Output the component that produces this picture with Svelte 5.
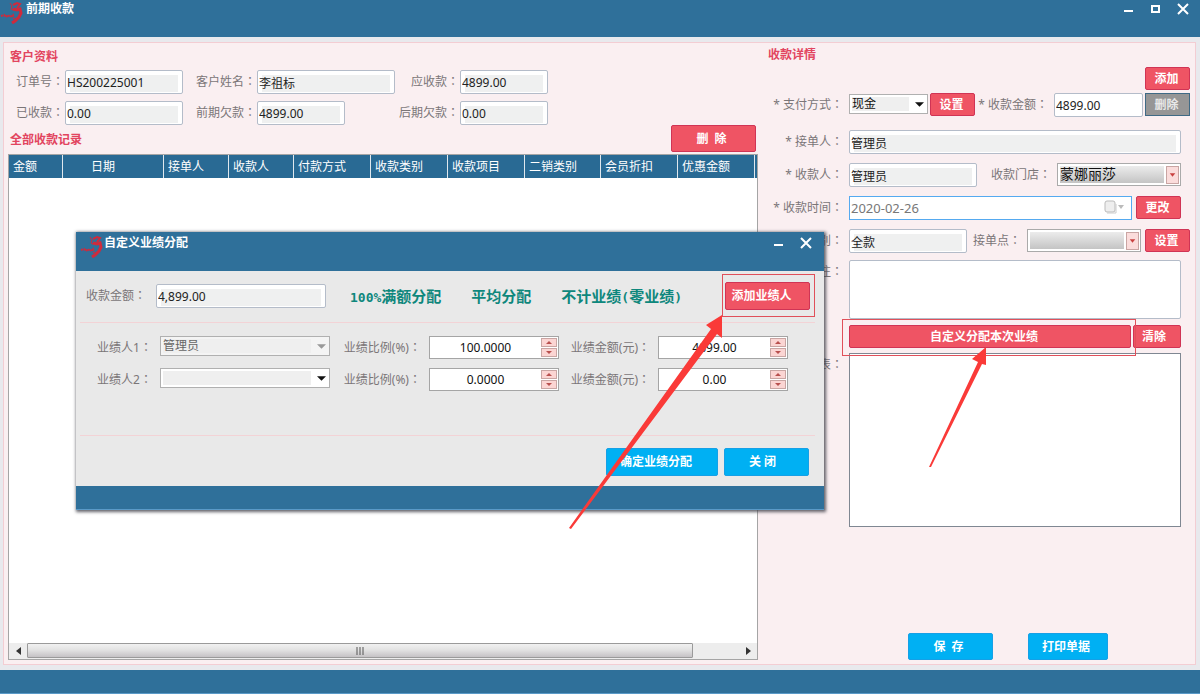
<script>
  let columns = [
    { name: "金额", width: 54 },
    { name: "日期", width: 101, indent: true },
    { name: "接单人", width: 65 },
    { name: "收款人", width: 65 },
    { name: "付款方式", width: 77 },
    { name: "收款类别", width: 77 },
    { name: "收款项目", width: 77 },
    { name: "二销类别", width: 76 },
    { name: "会员折扣", width: 77 },
    { name: "优惠金额", width: 77 },
  ];

  let customer = [
    { id: "order", label: "订单号", value: "HS200225001" },
    { id: "name", label: "客户姓名", value: "李祖标" },
    { id: "due", label: "应收款", value: "4899.00" },
    { id: "paid", label: "已收款", value: "0.00" },
    { id: "before", label: "前期欠款", value: "4899.00", short: true },
    { id: "after", label: "后期欠款", value: "0.00" },
  ];

  let people = [
    { person: "管理员", ratio: "100.0000", amount: "4899.00", locked: true },
    { person: "", ratio: "0.0000", amount: "0.00", locked: false },
  ];
</script>

<style>
  :global(body) {
    margin: 0;
    font: 12px/16px "Noto Sans", "Noto Sans CJK SC", sans-serif;
  }
  * {
    box-sizing: border-box;
  }
  button,
  input,
  select,
  textarea {
    font: inherit;
    margin: 0;
    min-width: 0;
  }
  .window {
    position: relative;
    min-height: 100vh;
    display: flex;
    flex-direction: column;
    background: #e8e9ed;
  }

  /* title bars */
  .titlebar {
    display: flex;
    align-items: flex-start;
    height: 37px;
    padding-right: 9px;
    background: #2f709a;
    color: #fff;
  }
  .titlebar h1,
  .titlebar h2 {
    flex: 1;
    margin: 0;
    padding-left: 2px;
    font-size: 12px;
    line-height: 18px;
    font-weight: bold;
  }
  .logo {
    width: 24px;
    height: 24px;
  }
  .tools {
    display: flex;
    gap: 11px;
    padding-top: 1px;
  }
  .tools button {
    width: 16px;
    height: 16px;
    padding: 0;
    border: 0;
    background: none;
  }
  .tools svg {
    display: block;
    stroke: #fff;
    stroke-width: 2;
    fill: none;
  }
  .bottombar {
    height: 24px;
    background: #2f709a;
    border-bottom: 1px solid #5a9ac8;
  }

  .panel {
    flex: 1;
    display: flex;
    margin: 5px 4px 5px 3px;
    border: 1px solid #f3cdd3;
    background: #faeff1;
  }
  .records {
    flex: 1;
    min-width: 0;
    display: flex;
    flex-direction: column;
    padding: 0 0 4px 4px;
  }
  .details {
    width: 437px;
    display: flex;
    flex-direction: column;
  }
  h3 {
    margin: 0;
    font-size: 12px;
    line-height: 27px;
    font-weight: bold;
    color: #e2455f;
    padding-left: 2px;
  }
  label {
    height: 24px;
    color: #7b7678;
    text-align: right;
    white-space: nowrap;
    line-height: 22px;
  }
  .colon {
    font-family: "Noto Sans CJK TC", sans-serif;
  }

  /* controls */
  .box {
    height: 24px;
    padding: 1px 1px 0;
    border: 1px solid #b4bcc9;
    border-radius: 2px;
    background: #fff;
    color: #222;
  }
  .box[readonly] {
    background: linear-gradient(#eff0f0, #eff0f0) 4px 4px / calc(100% - 8px) calc(100% - 5px) no-repeat #fff;
  }
  .btn {
    height: 23px;
    padding: 0;
    border: 1px solid #d03455;
    border-radius: 2px;
    background: #ef5464;
    color: #fff;
    font-weight: bold;
    white-space: pre;
  }
  .small {
    width: 45px;
    padding-right: 2px;
  }
  .btn.gray {
    border-color: #3f6a85;
    border-radius: 0;
    background: #969696;
    color: #e8e8e8;
  }
  .btn.blue {
    height: 28px;
    border-color: #16a0e6;
    background: #00b0f3;
  }
  .pick {
    display: grid;
    align-items: center;
  }
  .pick select,
  .pick .arrow {
    grid-area: 1 / 1;
  }
  .pick select {
    appearance: none;
    width: 100%;
    height: 20px;
    padding: 0 20px 1px 2px;
    border: 1px solid #b0b0b0;
    border-radius: 0;
    background: linear-gradient(#efefef, #efefef) 2px 2px / calc(100% - 20px) calc(100% - 4px) no-repeat #fff;
    color: #111;
    opacity: 1;
  }
  .pick select:disabled {
    background-color: #f4f4f4;
    color: #666;
  }
  .pick .arrow {
    justify-self: end;
    margin-right: 4px;
    width: 9px;
    height: 5px;
    pointer-events: none;
  }
  .pick.glossy select {
    height: 23px;
    padding-bottom: 2px;
    font-size: 14px;
    border-color: #aaa;
    background: linear-gradient(#ececec, #d8d8d8 50%, #c4c4c4) 2px 2px / calc(100% - 18px) calc(100% - 4px) no-repeat #fff;
  }
  .pick.glossy .arrow {
    margin-right: 2px;
    width: 13px;
    height: 18px;
    border: 1px solid #c9a5a3;
    background: #fbdcdb;
  }

  /* left side */
  .customer {
    display: grid;
    grid-template-columns: 57px 118px 74px 138px 65px 88px;
    row-gap: 7px;
  }
  .customer label {
    padding-right: 1px;
  }
  .short {
    width: 88px;
  }
  .records-head {
    display: flex;
    justify-content: space-between;
    padding-right: 2px;
    height: 29px;
  }
  .records-head h3 {
    line-height: 30px;
  }
  .records-head .btn {
    width: 85px;
    height: 27px;
    padding-right: 4px;
  }
  .table-box {
    flex: 1;
    display: flex;
    flex-direction: column;
    justify-content: space-between;
    border: 1px solid #a5a5a5;
    background: #fff;
  }
  table {
    width: 100%;
    table-layout: fixed;
    border-collapse: separate;
    border-spacing: 0;
  }
  th {
    height: 23px;
    padding: 0 0 0 4px;
    border-right: 1px solid #e0e8ee;
    background: #296a94;
    color: #fff;
    font-weight: normal;
    text-align: left;
    white-space: nowrap;
  }
  th:last-child {
    border-right: 0;
    padding: 0;
  }
  th.indent {
    padding-left: 28px;
  }
  .scroll {
    display: flex;
    height: 16px;
    background: #ededed;
  }
  .scroll button {
    width: 18px;
    padding: 0;
    border: 0;
    background: none;
  }
  .scroll svg {
    display: block;
    margin: auto;
  }
  .track {
    flex: 1;
    padding-right: 46px;
  }
  .thumb {
    display: flex;
    align-items: center;
    height: 15px;
    border: 1px solid #9a9a9a;
    border-radius: 1px;
    background: linear-gradient(#f1f1f1, #e0e0e0 50%, #c5c2c5);
  }

  /* right side */
  .details h3 {
    padding-left: 10px;
    line-height: 24px;
  }
  .row {
    display: flex;
    align-items: flex-start;
    padding-right: 14px;
    margin-bottom: 9px;
  }
  .row > label:first-child {
    width: 85px;
    margin-right: 6px;
  }
  .wide {
    padding-right: 5px;
  }
  .grow {
    flex: 1;
  }
  .add-row {
    display: flex;
    justify-content: flex-end;
    padding-right: 5px;
    margin-bottom: 3px;
  }
  .method {
    width: 79px;
    margin: 1px 2px 0 0;
  }
  .pay-label {
    width: 75px;
    padding-right: 2px;
    margin-right: 4px;
  }
  .money {
    width: 89px;
    margin-right: 2px;
  }
  .pay {
    margin-bottom: 13px;
  }
  .cashier {
    width: 128px;
  }
  .store-label {
    width: 74px;
    margin-right: 6px;
  }
  .kind {
    width: 118px;
  }
  .point-label {
    width: 54px;
    margin-right: 6px;
  }
  .point {
    flex: 1;
    margin-right: 4px;
  }
  .date {
    flex: 1;
    display: flex;
    align-items: center;
    height: 24px;
    margin-right: 4px;
    padding-right: 6px;
    border: 1px solid #55aaf0;
    background: #fff;
  }
  .date input {
    flex: 1;
    padding: 0 1px;
    border: 0;
    background: none;
    color: #777;
    font-size: 13px;
  }
  .date button {
    height: 16px;
    padding: 0;
    border: 0;
    background: none;
  }
  textarea {
    height: 59px;
    border: 1px solid #b4bcc9;
    border-radius: 2px;
    resize: none;
  }
  .list {
    height: 174px;
    border: 1px solid #7f8792;
    background: #fff;
  }
  .kinds {
    margin-bottom: 7px;
  }
  .note {
    margin-bottom: 6px;
  }
  .share {
    padding-left: 91px;
    margin-bottom: 5px;
  }
  .clear {
    width: 48px;
    padding-right: 6px;
  }
  .marked {
    position: relative;
    display: flex;
  }
  .marked .btn {
    flex: 1;
    padding-right: 12px;
  }
  .frame {
    position: absolute;
    inset: -6px -5px -8px -7px;
    border: 1px solid #e0505a;
    pointer-events: none;
  }
  .pointer {
    position: absolute;
    z-index: 2;
    pointer-events: none;
    fill: #fa3a38;
  }
  .share .marked {
    margin-right: 2px;
  }
  .share .pointer {
    left: 79px;
    top: 21px;
  }
  .actions {
    display: flex;
    gap: 35px;
    margin-top: auto;
    padding: 0 0 4px 150px;
  }
  .actions .blue {
    width: 80px;
    height: 27px;
    padding-right: 4px;
  }
  .actions .save {
    width: 85px;
  }

  /* dialog */
  .dialog {
    position: absolute;
    left: 76px;
    top: 232px;
    width: 748px;
    background: #e9e9e9;
    box-shadow: 1px 1px 3px 1px rgba(60, 60, 70, 0.8);
  }
  .dialog .titlebar {
    height: 39px;
    padding: 2px 10px 0 4px;
  }
  .dialog .titlebar h2 {
    padding-left: 0;
  }
  .dialog .tools {
    padding-top: 1px;
  }
  .total {
    display: flex;
    align-items: center;
    height: 51px;
    padding: 0 14px 2px 10px;
  }
  .total label {
    width: 60px;
    margin-right: 10px;
  }
  .total .box {
    width: 170px;
    margin-right: 24px;
  }
  .total a {
    margin-right: 30px;
    color: #0e877c;
    font-size: 15px;
    line-height: 20px;
    font-weight: bold;
    text-decoration: none;
    white-space: nowrap;
  }
  .mono {
    font: bold 13px "DejaVu Sans Mono", monospace;
  }
  .total .marked {
    width: 85px;
    margin-left: auto;
  }
  .total .marked .btn {
    height: 28px;
  }
  .total .frame {
    inset: -8px -5px -7px -3px;
  }
  .total .pointer {
    right: 86px;
    top: 32px;
  }
  .people {
    display: grid;
    grid-template-columns: 84px 170px 99px 130px 99px 130px;
    row-gap: 9px;
    align-content: start;
    height: 114px;
    margin: 0 9px 0 4px;
    padding-top: 13px;
    border-top: 1px solid #f3d3d6;
    border-bottom: 1px solid #f3d3d6;
  }
  .people label {
    height: 23px;
    padding-right: 12px;
  }
  .people .pick,
  .people .spin {
    align-self: start;
    margin-left: -4px;
    margin-right: 4px;
  }
  .spin {
    display: flex;
    align-items: center;
    height: 23px;
    padding-right: 1px;
    border: 1px solid #a5a5a5;
    background: #fff;
  }
  .spin input {
    flex: 1;
    padding: 0;
    border: 0;
    background: none;
    text-align: center;
    color: #111;
  }
  .steps {
    display: grid;
    gap: 1px;
  }
  .steps button {
    display: grid;
    place-items: center;
    width: 16px;
    height: 9px;
    padding: 0;
    border: 1px solid #c9a5a3;
    background: #fbd5d3;
  }
  .confirm {
    display: flex;
    justify-content: flex-end;
    gap: 6px;
    padding: 12px 15px 10px;
  }
  .confirm .btn {
    width: 112px;
    padding-right: 12px;
  }
  .confirm .close {
    width: 85px;
    padding-right: 8px;
  }
</style>

{#snippet caption(id, text)}
  <label for={id}>{text}<span class="colon">：</span></label>
{/snippet}

{#snippet logo()}
  <svg class="logo" viewBox="0 0 24 24" fill="none" stroke="#cf2a3c" aria-hidden="true">
    <path d="M13 5l4-2 3 1-3 4" stroke-width="2" />
    <path d="M13 9l4 1 3-1 1 4-2 4-4 4-3 2" stroke-width="3" />
    <path d="M10 3l2 3-1 3 2 1" stroke-width="1" />
    <path d="M1 16l3-1 2 2 2-2 2 2 3-2 1 4" stroke-width="2" stroke-dasharray="2 1" />
  </svg>
{/snippet}

{#snippet downArrow(color)}
  <svg class="arrow" viewBox="0 0 10 5"><path d="M0 0h10L5 5z" fill={color} /></svg>
{/snippet}

{#snippet redArrow()}
  <svg class="arrow" viewBox="0 0 12 16"><path d="M3 6h6L6 10z" fill="#c9403f" /></svg>
{/snippet}

{#snippet spinner(id, value)}
  <div class="spin">
    <input {id} type="text" {value} />
    <div class="steps">
      <button aria-label="增加"><svg width="6" height="3"><path d="M0 3h6L3 0z" fill="#b8504e" /></svg></button>
      <button aria-label="减少"><svg width="6" height="3"><path d="M0 0h6L3 3z" fill="#b8504e" /></svg></button>
    </div>
  </div>
{/snippet}

<div class="window">
  <header class="titlebar">
    {@render logo()}
    <h1>前期收款</h1>
    <div class="tools">
      <button aria-label="最小化"><svg width="16" height="16"><path d="M3 10h9" /></svg></button>
      <button aria-label="最大化"><svg width="16" height="16"><path d="M4 5h7v6H4z" /></svg></button>
      <button aria-label="关闭窗口"><svg width="16" height="16"><path d="M3 3l10 10M13 3L3 13" /></svg></button>
    </div>
  </header>

  <main class="panel">
    <section class="records">
      <h3>客户资料</h3>
      <div class="customer">
        {#each customer as field}
          {@render caption(field.id, field.label)}
          <input id={field.id} class="box" class:short={field.short} value={field.value} readonly />
        {/each}
      </div>
      <div class="records-head">
        <h3>全部收款记录</h3>
        <button class="btn">删  除</button>
      </div>
      <div class="table-box">
        <table>
          <colgroup>
            {#each columns as col}
              <col style="width: {col.width}px" />
            {/each}
            <col />
          </colgroup>
          <thead>
            <tr>
              {#each columns as col}
                <th class:indent={col.indent}>{col.name}</th>
              {/each}
              <th></th>
            </tr>
          </thead>
        </table>
        <div class="scroll">
          <button aria-label="向左"><svg width="5" height="8"><path d="M5 0v8L0 4z" fill="#333" /></svg></button>
          <div class="track">
            <div class="thumb">
              <svg width="9" height="8"><path d="M1 0v8M4 0v8M7 0v8" stroke="#555" stroke-width="1" /></svg>
            </div>
          </div>
          <button aria-label="向右"><svg width="5" height="8"><path d="M0 0v8l5-4z" fill="#333" /></svg></button>
        </div>
      </div>
    </section>

    <section class="details">
      <h3>收款详情</h3>
      <div class="add-row"><button class="btn small">添加</button></div>
      <div class="row wide pay">
        {@render caption("method", "* 支付方式")}
        <div class="pick method">
          <select id="method"><option>现金</option></select>
          {@render downArrow("#111")}
        </div>
        <button class="btn small">设置</button>
        <label class="pay-label" for="money">* 收款金额<span class="colon">：</span></label>
        <input id="money" class="box money" value="4899.00" />
        <button class="btn small gray">删除</button>
      </div>
      <div class="row">
        {@render caption("taker", "* 接单人")}
        <input id="taker" class="box grow" value="管理员" readonly />
      </div>
      <div class="row">
        {@render caption("cashier", "* 收款人")}
        <input id="cashier" class="box cashier" value="管理员" readonly />
        <label class="store-label" for="store">收款门店<span class="colon">：</span></label>
        <div class="pick glossy grow">
          <select id="store"><option>蒙娜丽莎</option></select>
          {@render redArrow()}
        </div>
      </div>
      <div class="row">
        {@render caption("date", "* 收款时间")}
        <div class="date">
          <input id="date" type="text" value="2020-02-26" />
          <button aria-label="选择日期">
            <svg width="21" height="14">
              <rect x="1" y="1" width="10" height="11" rx="2" fill="#eee" stroke="#bbb" />
              <path d="M3 13h9V4" fill="none" stroke="#ccc" />
              <path d="M14 5h6l-3 4z" fill="#bbb" />
            </svg>
          </button>
        </div>
        <button class="btn small">更改</button>
      </div>
      <div class="row wide kinds">
        {@render caption("kind", "* 收款类别")}
        <input id="kind" class="box kind" value="全款" readonly />
        <label class="point-label" for="point">接单点<span class="colon">：</span></label>
        <div class="pick glossy point">
          <select id="point"><option></option></select>
          {@render redArrow()}
        </div>
        <button class="btn small">设置</button>
      </div>
      <div class="row note">
        {@render caption("note", "备注")}
        <textarea id="note" class="grow"></textarea>
      </div>
      <div class="row share">
        <div class="marked grow">
          <button class="btn">自定义分配本次业绩</button>
          <span class="frame"></span>
          <svg class="pointer" width="62" height="122">
            <path d="M58 1L44 13l6 3L1 121l2 0L54 18l4 1z" />
          </svg>
        </div>
        <button class="btn clear">清除</button>
      </div>
      <div class="row">
        <label for="list">业绩列表<span class="colon">：</span></label>
        <output id="list" class="list grow"></output>
      </div>
      <div class="actions">
        <button class="btn blue save">保  存</button>
        <button class="btn blue">打印单据</button>
      </div>
    </section>
  </main>

  <footer class="bottombar"></footer>

  <div class="dialog" role="dialog" aria-labelledby="dialog-title">
    <div class="titlebar">
      {@render logo()}
      <h2 id="dialog-title">自定义业绩分配</h2>
      <div class="tools">
        <button aria-label="最小化"><svg width="16" height="16"><path d="M3 10h9" /></svg></button>
        <button aria-label="关闭对话框"><svg width="16" height="16"><path d="M3 3l10 10M13 3L3 13" /></svg></button>
      </div>
    </div>
    <div class="total">
      {@render caption("total", "收款金额")}
      <input id="total" class="box" value="4,899.00" readonly />
      <a href="#full"><span class="mono">100%</span>满额分配</a>
      <a href="#even">平均分配</a>
      <a href="#none">不计业绩<span class="mono">(</span>零业绩<span class="mono">)</span></a>
      <div class="marked">
        <button class="btn">添加业绩人</button>
        <span class="frame"></span>
        <svg class="pointer" width="156" height="218">
          <path d="M154 1L138 11l5 4L1 214l2 1L149 20l5 4z" />
        </svg>
      </div>
    </div>
    <div class="people">
      {#each people as row, i}
        {@render caption(`person${i}`, `业绩人${i + 1}`)}
        <div class="pick">
          <select id="person{i}" disabled={row.locked}><option>{row.person}</option></select>
          {@render downArrow(row.locked ? "#999" : "#111")}
        </div>
        {@render caption(`ratio${i}`, "业绩比例(%)")}
        {@render spinner(`ratio${i}`, row.ratio)}
        {@render caption(`amount${i}`, "业绩金额(元)")}
        {@render spinner(`amount${i}`, row.amount)}
      {/each}
    </div>
    <div class="confirm">
      <button class="btn blue">确定业绩分配</button>
      <button class="btn blue close">关 闭</button>
    </div>
    <div class="bottombar"></div>
  </div>
</div>
